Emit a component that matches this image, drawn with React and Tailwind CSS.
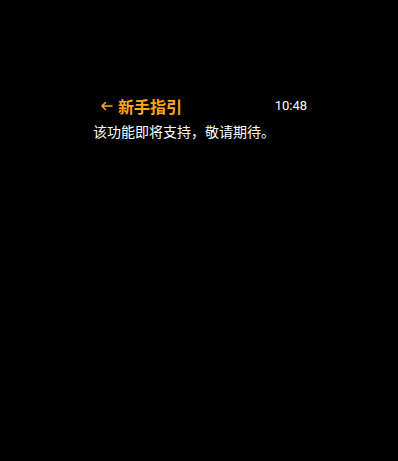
export default function App() {
  return (
    <div className="w-[398px] h-[461px] bg-black" style={{ fontFamily: '"Noto Sans CJK SC", "Noto Sans", sans-serif' }}>
      <div className="pt-[96px] pl-[93px] w-[307px]">
        <div className="flex items-center justify-between h-[20px] pl-[7px]">
          <div className="flex items-center gap-[5px] text-[#FFA71A]">
            <svg width="13" height="10" viewBox="0 0 13 10" fill="none">
              <path d="M12 5H2M5.5 1.5L2 5l3.5 3.5" stroke="currentColor" strokeWidth="1.6" strokeLinecap="round" strokeLinejoin="round" />
            </svg>
            <span className="text-[16px] font-bold leading-[20px]">新手指引</span>
          </div>
          <span className="text-[13px] text-white leading-[20px]" style={{ fontFamily: 'Roboto, sans-serif' }}>10:48</span>
        </div>
        <p className="mt-[5px] text-[14px] leading-[20px] text-white">该功能即将支持，敬请期待。</p>
      </div>
    </div>
  )
}
